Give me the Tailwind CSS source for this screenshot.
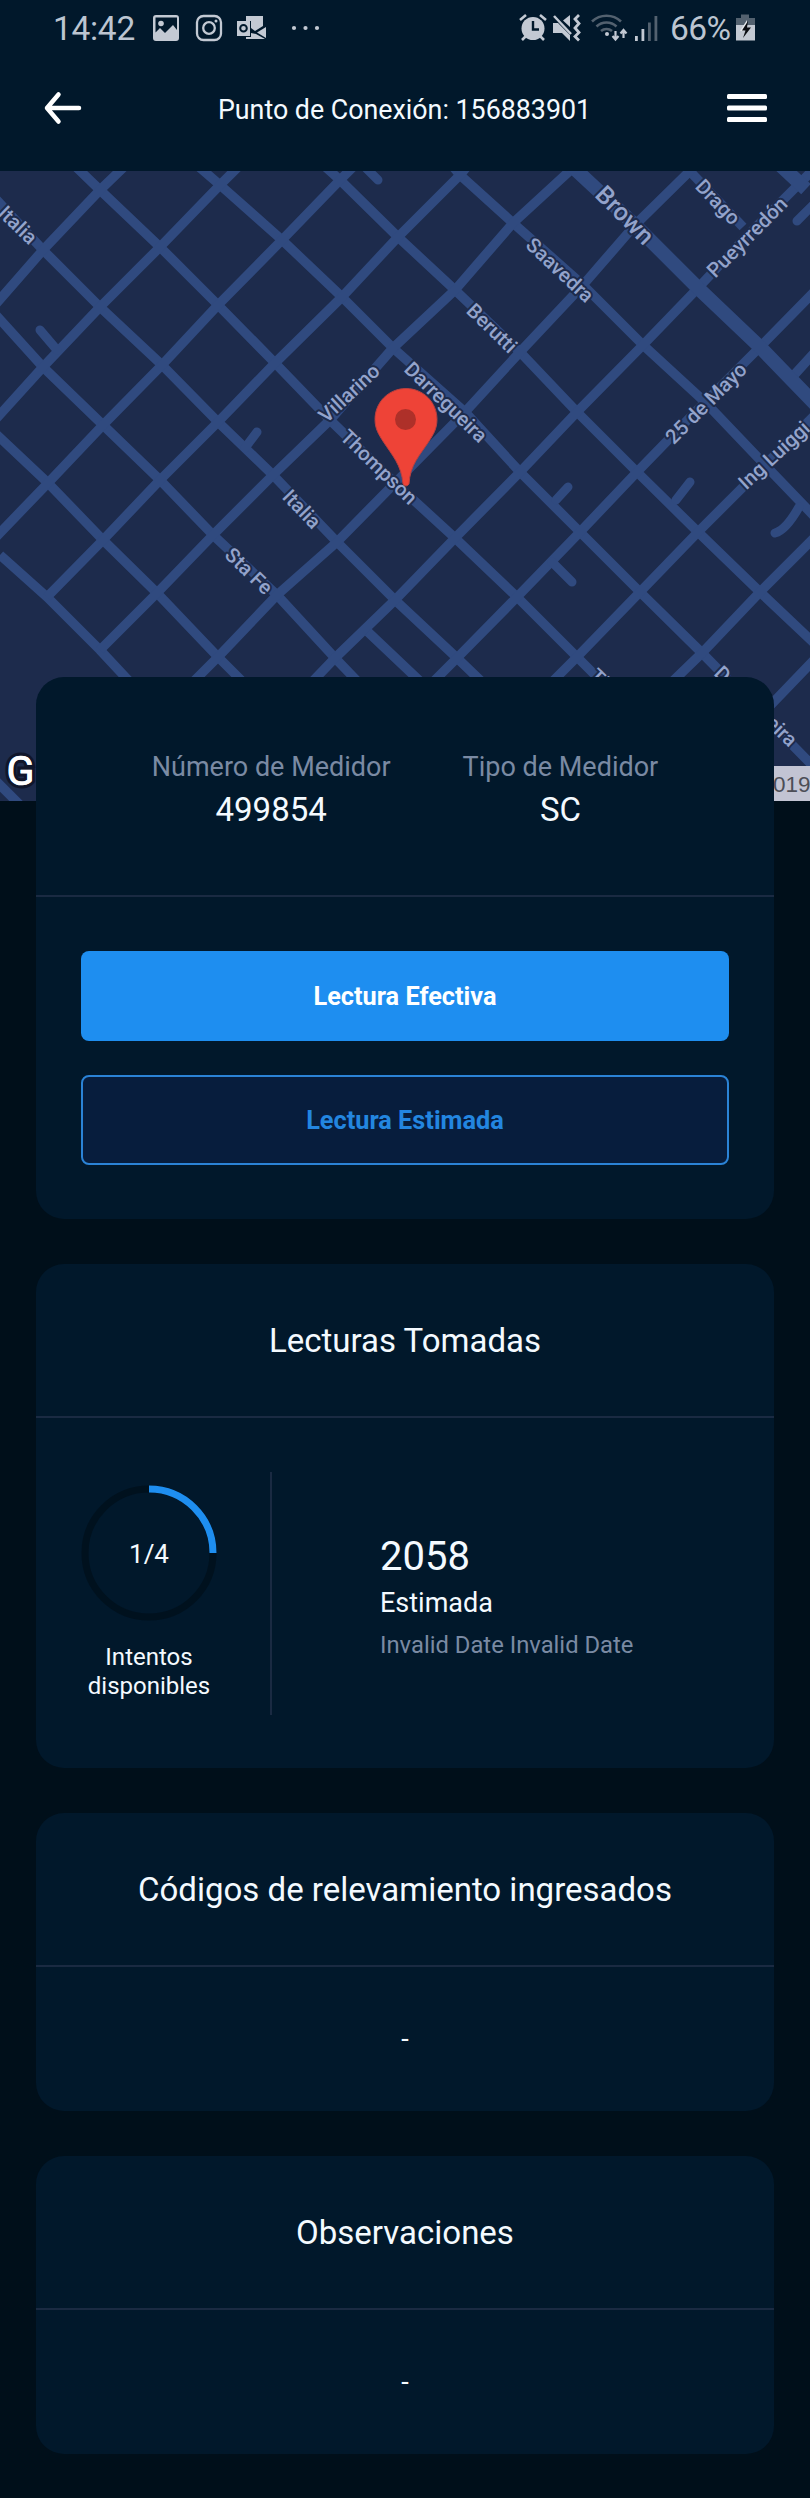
<!DOCTYPE html>
<html lang="es">
<head>
<meta charset="utf-8">
<title>Punto de Conexión</title>
<script src="https://cdn.jsdelivr.net/npm/@tailwindcss/browser@4"></script>
</head>
<body class="h-[2498px] w-[810px] overflow-x-hidden bg-[#000f1a] font-['Roboto',sans-serif] text-[#f4faff]">

<header class="h-[171px] bg-[#01182b]">
  <!-- Status bar -->
  <div class="flex h-14 items-center text-[#bcc5d1]">
    <span class="ml-[53px] w-[100px] pt-0.5 text-[33.500px] leading-none tracking-[-0.3px]">14:42</span>
    <svg class="h-14 w-[190px]" viewBox="153 0 190 56" fill="#c3c9d3">
      <path fill-rule="evenodd" d="M156 15h20a3 3 0 0 1 3 3v20a3 3 0 0 1-3 3h-20a3 3 0 0 1-3-3V18a3 3 0 0 1 3-3zm-.500 2.500v15l4.500-4.500 5 5 8-8 4 5V17.500z"/>
      <circle cx="161" cy="23.500" r="2.800"/>
      <g fill="none" stroke="#c3c9d3" stroke-width="2.300"><rect x="197" y="16" width="24" height="24" rx="6.500"/><circle cx="209" cy="28" r="5.800"/></g>
      <circle cx="216" cy="21" r="1.500"/>
      <path d="M246 16h17v10l-8 5-4-3v-7h-5zM237 21h13v15h-13zM266 27v11l-9-5.500zM246 37h5v-4l5 1 9 5h-19z"/>
      <circle cx="243.500" cy="28.300" r="3.300" fill="none" stroke="#00182b" stroke-width="2"/>
      <circle cx="294" cy="28" r="2.100"/><circle cx="305.500" cy="28" r="2.100"/><circle cx="317" cy="28" r="2.100"/>
    </svg>
    <svg class="ml-auto h-14 w-[150px]" viewBox="517 0 150 56" fill="#c3c9d3">
      <!-- Alarm -->
      <circle cx="534" cy="28.500" r="11.500"/>
      <path d="M521 20l6-5M541 15l6 5M527 36l-4 4M541 36l4 4" stroke="#c3c9d3" stroke-width="2.600"/>
      <path d="M534 21v8.500h6" fill="none" stroke="#00182b" stroke-width="2.400"/>
      <!-- Muted, vibrating -->
      <path d="M554 23h5l12 12v6l-8-8h-9zM564 20.500l7-5.500v12z"/>
      <path d="M555 16l17 18" stroke="#c3c9d3" stroke-width="2.500"/>
      <path d="M580 15l-4 4 4 4.500-4 4.500 4 4.500-4 4 4 4" fill="none" stroke="#c3c9d3" stroke-width="2.800"/>
      <!-- Wi-Fi with traffic arrows -->
      <g fill="none" stroke="#53616f" stroke-width="2.600"><path d="M593 21.500a21 21 0 0 1 29 0M597.500 26.500a14.500 14.500 0 0 1 20 0M602 31a8.500 8.500 0 0 1 11 0"/></g>
      <circle cx="608" cy="34" r="2"/>
      <path d="M616.500 31v8M613.500 36l3 3.500 3-3.500M624.500 38v-8M621.500 33.500l3-3.500 3 3.500" fill="none" stroke="#c3c9d3" stroke-width="2.200"/>
      <!-- Signal -->
      <path d="M636 36h2.800v5H636zM642.500 29h2.800v12h-2.800z"/>
      <path fill="#53616f" d="M649 22.500h2.800V41H649zM655.500 16h2.800v25h-2.800z"/>
    </svg>
    <span class="ml-[4px] w-[61px] pt-0.5 text-[33.500px] leading-none tracking-[-0.6px]">66%</span>
    <svg class="mr-[55px] ml-[4px] h-14 w-[20px]" viewBox="738 0 20 56">
      <path fill="#53616f" d="M744 14.500h8V18h6v8h-19v-8h5z"/><path fill="#c3c9d3" d="M739 25h19v15.500h-19z"/><path fill="#e6e9ee" d="M750 20l-7 11h4l3-6z"/><path fill="#0a0d12" d="M751 21l-6 9.500h3.500L746 38l8-10.500h-4z"/>
    </svg>
  </div>
  <!-- Title bar -->
  <div class="flex h-[104px] items-center">
    <svg class="ml-[44px] h-9 w-[38px]" viewBox="0 0 38 36" fill="none" stroke="#fff" stroke-width="4.500" stroke-linecap="round" stroke-linejoin="round"><path d="M14.500 4.500L3 18l11.500 13.500M3 18h32"/></svg>
    <h1 class="flex-1 pt-[5px] text-center text-[26.800px]">Punto de Conexión: 156883901</h1>
    <svg class="mr-[43px] h-[30px] w-[40px]" viewBox="0 0 40 30" fill="#fff"><rect y="1" width="40" height="5" rx="1.500"/><rect y="12.500" width="40" height="5" rx="1.500"/><rect y="24" width="40" height="5" rx="1.500"/></svg>
  </div>
</header>

<!-- Map -->
<svg class="block h-[630px] w-[810px]" viewBox="0 171 810 630">
  <rect y="171" width="810" height="630" fill="#1d2b4c"/>
  <g fill="none" stroke="#304a7f" stroke-width="9.500" stroke-linejoin="round">
    <path d="M0 555L47 597L100 650L170 725M-5 780L20 805"/>
    <path d="M-5 314L43 367L103 425L160 480L213 535L277 595L335 658L360 684"/>
    <path d="M-5 433L48 483L103 540L157 593L218 657L245 684"/>
    <path d="M-5 198L43 250L100 307L162 365L218 422L273 475L337 542L395 600L457 658L482 682"/>
    <path d="M72 163L100 190L160 247L218 305L275 363L330 420L395 483L455 538L517 597L577 657L605 685"/>
    <path d="M198 166L220 185L282 240L342 297L393 348L465 412L520 472L580 532L640 592L702 653L815 768"/>
    <path d="M320 162L340 180L398 237L455 290L520 352L577 412L637 472L698 532L760 592L815 644"/>
    <path d="M450 163L460 175L513 223L583 285L643 345L705 402L765 465L815 517"/>
    <path d="M682 163L743 227"/>
    <path d="M-5 305L43 250L100 190L127 164"/>
    <path d="M-5 420L43 367L100 307L160 247L220 185L240 165"/>
    <path d="M-5 538L48 483L103 425L162 365L218 305L282 240L340 180L356 164"/>
    <path d="M47 597L103 540L160 480L218 422L275 363L342 297L398 237L460 175L470 163"/>
    <path d="M100 650L157 593L213 535L273 475L330 420L393 348L455 290L513 223L575 166"/>
    <path d="M193 682L218 657L277 595L337 542L395 483L465 412L520 352L583 285L635 225L696 165"/>
    <path d="M312 682L335 658L395 600L455 538L520 472L577 412L643 345L698 288L743 240L798 185L815 168"/>
    <path d="M433 682L457 658L517 597L580 532L637 472L705 402L760 347L815 291"/>
    <path d="M552 682L577 657L640 592L698 532L765 465L815 415"/>
    <path d="M672 682L702 653L760 592L815 537"/>
    <path d="M765 711L815 659M795 374L815 352M368 632L425 686"/>
  </g>
  <path d="M560 155L635 225L698 288L760 347L815 404M778 163L806 189" fill="none" stroke="#304a7f" stroke-width="14"/>
  <g fill="none" stroke="#304a7f" stroke-width="9" stroke-linecap="round">
    <path d="M40 330L57 350M257 432L245 448M366 168L378 180M568 487L556 500M552 562L572 582M690 482L676 500M775 533Q786 530 799 507M797 221L815 203"/>
  </g>
  <g fill="#93a3cb" stroke="#1d2b4c" stroke-width="4" stroke-linejoin="round" paint-order="stroke" text-anchor="middle" font-size="20.300" font-weight="500">
    <text transform="translate(18 225) rotate(44)" dy=".35em">Italia</text>
    <text transform="translate(349 393) rotate(-43)" dy=".35em">Villarino</text>
    <text transform="translate(379 467) rotate(44)" dy=".35em">Thompson</text>
    <text transform="translate(446 402) rotate(44)" dy=".35em">Darregueira</text>
    <text transform="translate(492 328) rotate(44)" dy=".35em">Berutti</text>
    <text transform="translate(560 270) rotate(43)" dy=".35em">Saavedra</text>
    <text transform="translate(625 215) rotate(45)" dy=".35em" font-size="25">Brown</text>
    <text transform="translate(718 202) rotate(46)" dy=".35em">Drago</text>
    <text transform="translate(747 237) rotate(-45)" dy=".35em">Pueyrredón</text>
    <text transform="translate(706 403) rotate(-45)" dy=".35em">25 de Mayo</text>
    <text transform="translate(774 455) rotate(-43)" dy=".35em">Ing Luiggi</text>
    <text transform="translate(302 509) rotate(46)" dy=".35em">Italia</text>
    <text transform="translate(249 571) rotate(44)" dy=".35em">Sta Fe</text>
    <text transform="translate(628 706) rotate(44)" dy=".35em">Thompson</text>
    <text transform="translate(756 706) rotate(44)" dy=".35em">Darregueira</text>
  </g>
  <path d="M406 388.500C389 388.500 375 402 375 419.500C375 429 379 435 383.500 442C392 455 401.500 465 403 484Q406 488 409 484C410 465 420 455 428.500 442C433 435 437 429 437 419.500C437 402 423 388.500 406 388.500Z" fill="#ee4337" stroke="#b8403f" stroke-width="1"/>
  <circle cx="405.500" cy="419.500" r="10.500" fill="#ae3029"/>
  <text x="6.500" y="785" font-size="41" fill="#fff" stroke="#10162b" stroke-width="7" paint-order="stroke">G</text>
  <text x="6.500" y="785" font-size="41" fill="#fff" stroke="#fff" stroke-width=".7">G</text>
  <rect x="760" y="766" width="50" height="35" fill="#c2c4d3"/>
  <text x="773" y="792" font-size="22.500" fill="#4c4e57" font-family="Liberation Sans">019</text>
</svg>

<main class="relative mx-9 -mt-[124px] flex flex-col gap-[45px]">
  <section class="rounded-[28px] bg-[#01182b]">
    <div class="flex h-[220px] justify-center gap-[72px] border-b-2 border-[#1a2a42] pt-[70px] text-center">
      <div>
        <p class="text-[27px] leading-10 text-[#7a8aa3]">Número de Medidor</p>
        <p class="mt-[3px] text-[33px] leading-10">499854</p>
      </div>
      <div>
        <p class="text-[27px] leading-10 text-[#7a8aa3]">Tipo de Medidor</p>
        <p class="mt-[3px] text-[33px] leading-10">SC</p>
      </div>
    </div>
    <div class="flex flex-col gap-[34px] px-[45px] pt-[54px] pb-[54px]">
      <button class="h-[90px] rounded-lg bg-[#1e8ef0] pt-0.5 text-[25.300px] font-bold text-white">Lectura Efectiva</button>
      <button class="h-[90px] rounded-lg border-2 border-[#2b83d6] bg-[#071d3d] pt-0.5 text-[25.300px] font-bold text-[#2386e0]">Lectura Estimada</button>
    </div>
  </section>

  <section class="h-[504px] rounded-[28px] bg-[#01182b]">
    <h2 class="flex h-[154px] items-center justify-center border-b-2 border-[#1a2a42] pt-0.5 text-[33px]">Lecturas Tomadas</h2>
    <div class="flex pt-[54px]">
      <div class="mr-[53px] ml-[45px] w-[136px] pt-[13px] text-center">
        <div class="grid place-items-center">
          <svg class="col-start-1 row-start-1 h-[136px] w-[136px]" viewBox="0 0 136 136" fill="none" stroke-width="7">
            <circle cx="68" cy="68" r="64" stroke="#00111e"/>
            <path d="M68 4a64 64 0 0 1 64 64" stroke="#1e8ef0"/>
          </svg>
          <span class="col-start-1 row-start-1 pt-0.5 text-[26px]">1/4</span>
        </div>
        <p class="mt-[22px] text-[24px] leading-[28.500px]">Intentos disponibles</p>
      </div>
      <div class="h-[243px] w-0.5 bg-[#1a2a42]"></div>
      <div class="ml-[108px] pt-[61px]">
        <p class="text-[40px] leading-[48px]">2058</p>
        <p class="mt-[2px] text-[27px] leading-10">Estimada</p>
        <p class="mt-[2px] text-[23.800px] leading-10 text-[#7a8aa3]">Invalid Date Invalid Date</p>
      </div>
    </div>
  </section>

  <section class="h-[298px] rounded-[28px] bg-[#01182b]">
    <h2 class="flex h-[154px] items-center justify-center border-b-2 border-[#1a2a42] pt-0.5 text-[33px]">Códigos de relevamiento ingresados</h2>
    <p class="flex h-36 items-center justify-center text-[27px]">-</p>
  </section>

  <section class="h-[298px] rounded-[28px] bg-[#01182b]">
    <h2 class="flex h-[154px] items-center justify-center border-b-2 border-[#1a2a42] pt-0.5 text-[33px]">Observaciones</h2>
    <p class="flex h-36 items-center justify-center text-[27px]">-</p>
  </section>
</main>
</body>
</html>
